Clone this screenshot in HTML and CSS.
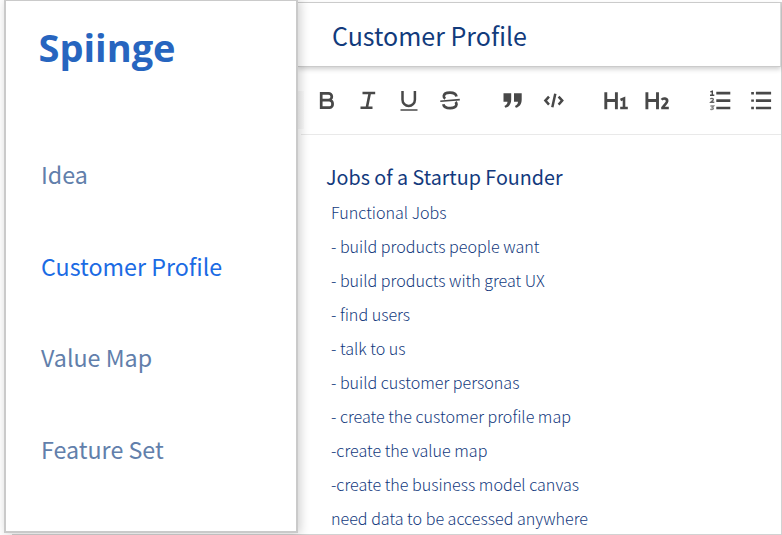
FILE: index.html
```html
<!DOCTYPE html>
<html lang="en">
<head>
<meta charset="utf-8">
<title>Spiinge</title>
<link rel="stylesheet" href="styles.css">
</head>
<body>
<div class="app">
  <aside class="sidebar">
    <div class="logo">Spiinge</div>
    <nav class="nav">
      <a class="nav-item">Idea</a>
      <a class="nav-item active">Customer Profile</a>
      <a class="nav-item">Value Map</a>
      <a class="nav-item">Feature Set</a>
    </nav>
  </aside>
  <main class="main">
    <header class="header"><h1 class="title">Customer Profile</h1></header>
    <div class="toolbar">
      <svg class="tools" width="484" height="40" viewBox="298 80 484 40" fill="none" stroke="#484848" stroke-width="2.7">
        <path d="M321.2 93.3h7.2a3.4 3.4 0 0 1 0 6.8h-7.2zM321.2 100.1h8.4a3.9 3.9 0 0 1 0 7.6h-8.4z"/>
        <path d="M362.5 93h12.7M360.5 107.7h12M369.8 93l-3 14.7" stroke-width="2.6"/>
        <path d="M402.5 91v8.8a6.2 6.2 0 0 0 12.4 0V91" stroke-width="2.5"/><path d="M400.5 110h17" stroke-width="1.5"/>
        <path d="M456.5 96.5c-1-5-12-5-12.7-.5-.2 1.3.5 2 1.5 2.6M443.3 104.2c1 5.2 13 5.2 13.2.2 0-1-.4-1.8-1-2.4" stroke-width="2.7"/><path d="M440.3 101.3l19.5-1.7" stroke-width="1.6"/>
        <path fill="#484848" stroke="none" d="M503.5 93.3h7.7v6.2c0 4.8-2.4 7.5-5.8 8.3l-1-1.7c2-1 3-2.4 3.1-4.4h-4zM514 93.3h7.7v6.2c0 4.8-2.4 7.5-5.8 8.3l-1-1.7c2-1 3-2.4 3.1-4.4h-4z"/>
        <path d="M549 96.6l-3.6 4 3.6 4M558.6 96.6l3.6 4-3.6 4M555.3 93.8l-3 13.5" stroke-width="2.5"/>
        <path d="M605.8 92.3V109.3M616.4 92.3V109.3M605.8 100.5h10.6M646.9 92.3V109.3M657.5 92.3V109.3M646.9 100.5h10.6" stroke-width="2.9"/>
        <path d="M620.5 100l3.5-1.6v10M620.2 108h7.6" stroke-width="2.6"/>
        <path d="M661.6 99.8c1.6-2 5.7-1.5 5.6 1.3-.1 1.8-2.7 3.6-4.6 6.5M661.2 108h7.6" stroke-width="2.6"/>
        <path d="M716.3 93.2h14M716.3 100.6h14M716.3 108h14M755.9 93.2h15.2M755.9 100.6h15.2M755.9 108h15.2"/>
        <path d="M751.2 93.2h2.7M751.2 100.6h2.7M751.2 108h2.7" stroke-width="2.4"/>
        <path d="M710.3 91.9l2-.6v4M710 95.3h4.3" stroke-width="1.4"/>
        <path d="M710.3 99c1-1 3-.7 3 .5 0 .9-1.3 1.5-2.5 2.8h3.5" stroke-width="1.4" stroke="#666"/>
        <path d="M710.4 106h3.2l-1.4 1.6c2 .2 1.5 2.3-2 1.8" stroke-width="1.4" stroke="#888"/>
      </svg>
    </div>
    <article class="doc">
      <h2 class="doc-title">Jobs of a Startup Founder</h2>
      <p>Functional Jobs</p>
      <p>- build products people want</p>
      <p>- build products with great UX</p>
      <p>- find users</p>
      <p>- talk to us</p>
      <p>- build customer personas</p>
      <p>- create the customer profile map</p>
      <p>-create the value map</p>
      <p>-create the business model canvas</p>
      <p>need data to be accessed anywhere</p>
    </article>
  </main>
</div>
</body>
</html>
```
FILE: styles.css
```css
* { box-sizing: border-box; }
body {
  margin: 0;
  background: #fff;
  overflow: hidden;
  font-family: "Noto Sans CJK SC", "Noto Sans", sans-serif;
}
.app { display: flex; height: 535px; padding-left: 4px; }
.sidebar {
  position: relative;
  z-index: 2;
  flex: none;
  width: 294px;
  height: 534px;
  margin-top: -1px;
  border: 2px solid #cacaca;
  background: #fff;
  box-shadow: 2px 1px 10px rgba(0, 0, 0, .2);
}
.logo {
  margin: 18px 0 0 32.5px;
  height: 56px;
  line-height: 56px;
  font-family: "Open Sans", sans-serif;
  font-weight: 700;
  font-size: 38px;
  color: #2765bf;
}
.nav { display: flex; flex-direction: column; margin: 79px 0 0 35px; gap: 51.7px; }
.nav-item { height: 40px; line-height: 40px; font-size: 23.25px; font-weight: 400; color: #627fab; white-space: nowrap; }
.nav-item.active { color: #1b6be4; }
.main {
  flex: 1;
  min-width: 0;
  margin-top: 2px;
  margin-left: -286px;
  padding-left: 286px;
  border: 1px solid #d2d2d2;
  border-left: 0;
}
.header {
  height: 64px;
  border-bottom: 1px solid #cbcbcb;
  border-right: 1px solid #d8d8d8;
  box-shadow: 0 2px 5px rgba(0, 0, 0, .2);
  padding-left: 34px;
}
.title { margin: 0; line-height: 64px; font-size: 25px; font-weight: 400; color: #123b7c; white-space: nowrap; }
.toolbar {
  height: 68px;
  padding-top: 13px;
  overflow: hidden;
  background:
    linear-gradient(#e9e9e9, #e9e9e9) 3px 100% / 100% 1px no-repeat,
    linear-gradient(90deg, #f6f6f6, #fbfbfb) 0 24px / 6px 38px no-repeat;
}
.tools { display: block; }
.doc { padding: 23px 0 0 33px; color: #12397d; white-space: nowrap; }
.doc-title { margin: 0 0 0 -5px; height: 37px; line-height: 37px; font-size: 19.7px; font-weight: 400; }
.doc p { margin: 0; height: 34px; line-height: 34px; font-size: 16.1px; font-weight: 300; }
```
